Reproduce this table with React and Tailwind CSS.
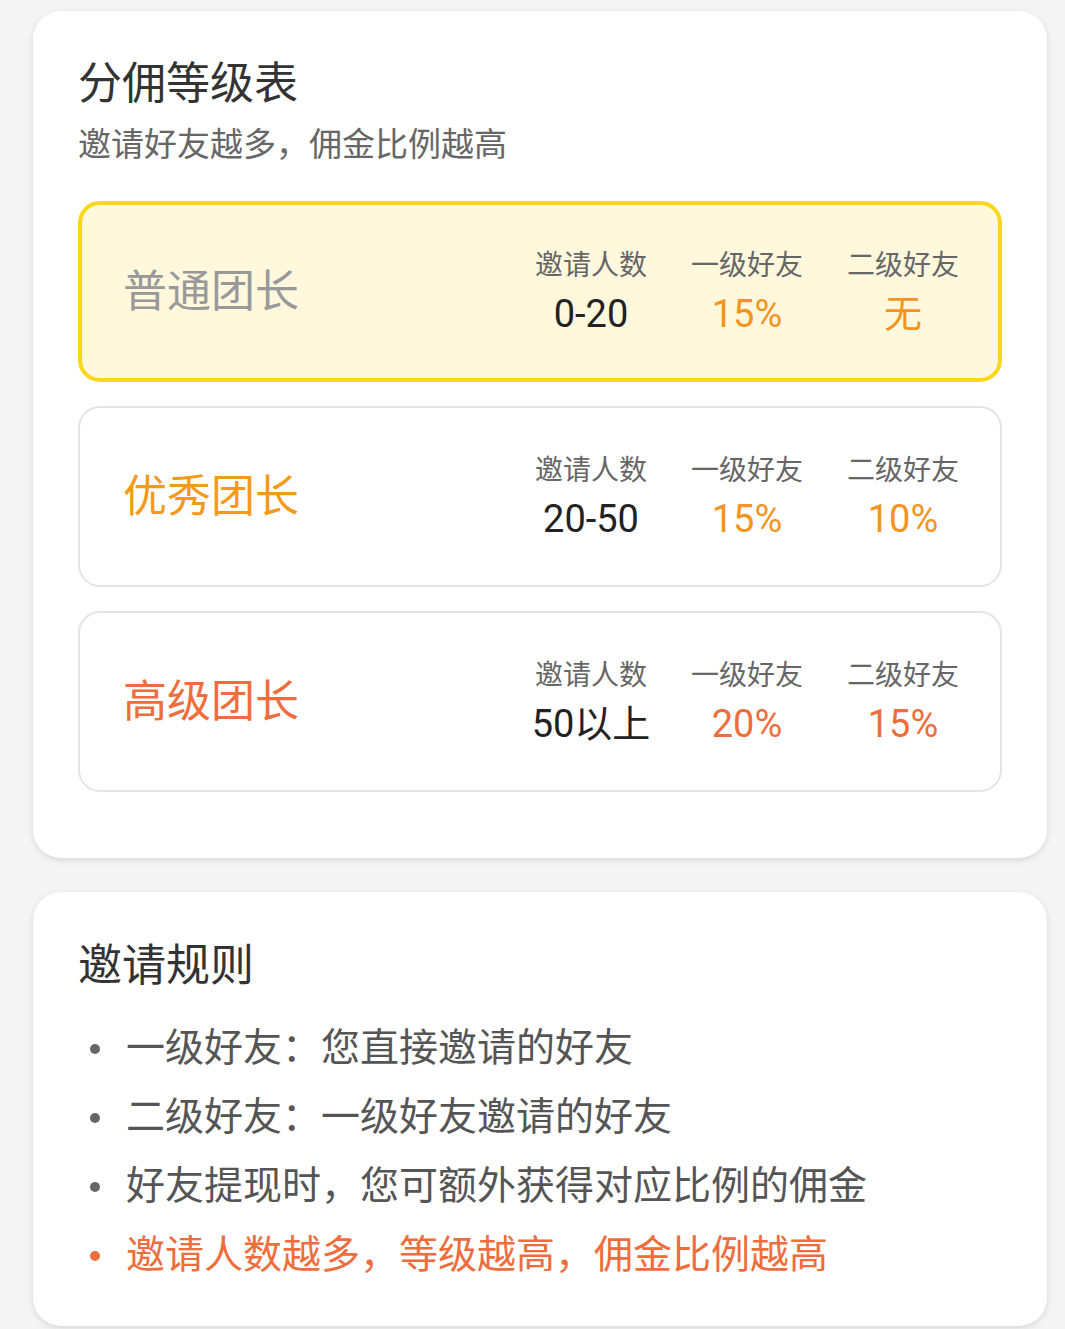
import React from 'react';

const tiers = [
  { name: '普通团长', range: '0-20', first: '15%', second: '无', active: true },
  { name: '优秀团长', range: '20-50', first: '15%', second: '10%' },
  { name: '高级团长', range: '50以上', first: '20%', second: '15%', high: true },
];

const rules = [
  { text: '一级好友：您直接邀请的好友' },
  { text: '二级好友：一级好友邀请的好友' },
  { text: '好友提现时，您可额外获得对应比例的佣金' },
  { text: '邀请人数越多，等级越高，佣金比例越高', hot: true },
];

function Col({ label, value, valueClass }) {
  return (
    <div className="w-[156px] flex flex-col items-center">
      <div className="text-[28px] leading-[36px] text-[#666]">{label}</div>
      <div className={`mt-[8px] text-[38px] leading-[44px] ${valueClass}`}>{value}</div>
    </div>
  );
}

function TierRow({ tier }) {
  const box = tier.active
    ? 'border-4 border-[#fbd61b] bg-[#fff8dd] pl-[41px] pr-[17px]'
    : 'border-2 border-[#e4e4e4] bg-white pl-[43px] pr-[19px]';
  const nameColor = tier.active ? 'text-[#999]' : tier.high ? 'text-[#ee6d3d]' : 'text-[#f39a1a]';
  const valColor = tier.high ? 'text-[#ee6d3d]' : 'text-[#f3941f]';
  return (
    <div className={`h-[181px] rounded-[22px] flex items-center ${box}`}>
      <div className={`flex-1 text-[44px] leading-[56px] ${nameColor}`}>{tier.name}</div>
      <Col label="邀请人数" value={tier.range} valueClass="text-[#222]" />
      <Col label="一级好友" value={tier.first} valueClass={valColor} />
      <Col label="二级好友" value={tier.second} valueClass={valColor} />
    </div>
  );
}

export default function App() {
  return (
    <div
      className="min-h-[1329px] bg-[#f4f4f4] pl-[33px] pr-[18px] pt-[11px]"
      style={{ fontFamily: 'Roboto, "Noto Sans CJK SC", sans-serif' }}
    >
      <div className="bg-white rounded-[28px] shadow-[0_2px_6px_rgba(0,0,0,0.12)] px-[45px] pt-[45px] pb-[66px]">
        <h1 className="text-[44px] leading-[56px] text-[#333]">分佣等级表</h1>
        <p className="mt-[11px] text-[33px] leading-[44px] text-[#666]">邀请好友越多，佣金比例越高</p>
        <div className="mt-[34px] flex flex-col gap-[24px]">
          {tiers.map(t => <TierRow key={t.name} tier={t} />)}
        </div>
      </div>

      <div className="mt-[34px] bg-white rounded-[28px] shadow-[0_2px_6px_rgba(0,0,0,0.12)] px-[45px] pt-[46px] pb-[36px]">
        <h2 className="text-[44px] leading-[56px] text-[#333]">邀请规则</h2>
        <ul className="mt-[20px]">
          {rules.map(r => (
            <li key={r.text} className={`flex items-center h-[69px] text-[39px] ${r.hot ? 'text-[#ee6d3d]' : 'text-[#555]'}`}>
              <span className={`ml-[12px] mr-[26px] w-[10px] h-[10px] rounded-full ${r.hot ? 'bg-[#ee6d3d]' : 'bg-[#666]'}`} />
              {r.text}
            </li>
          ))}
        </ul>
      </div>
    </div>
  );
}
